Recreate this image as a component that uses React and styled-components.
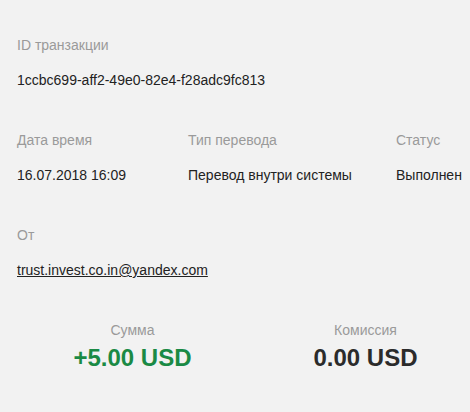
import styled, { createGlobalStyle } from "styled-components";

const GlobalStyle = createGlobalStyle`
    body {
        margin: 0;
        background: #f2f2f2;
        font-family: "Liberation Sans", Arial, sans-serif;
    }
`

export default function App() {
    return (
        <>
            <GlobalStyle />
            <Page>
                <Section>
                    <Label>ID транзакции</Label>
                    <Value>1ccbc699-aff2-49e0-82e4-f28adc9fc813</Value>
                </Section>

                <InfoGrid>
                    <Label>Дата время</Label>
                    <Label>Тип перевода</Label>
                    <Label>Статус</Label>
                    <Value>16.07.2018 16:09</Value>
                    <Value>Перевод внутри системы</Value>
                    <Value>Выполнен</Value>
                </InfoGrid>

                <Section>
                    <Label>От</Label>
                    <Value><Email href="#">trust.invest.co.in@yandex.com</Email></Value>
                </Section>

                <Totals>
                    <Total>
                        <TotalLabel>Сумма</TotalLabel>
                        <Amount $positive>+5.00 USD</Amount>
                    </Total>
                    <Total>
                        <TotalLabel>Комиссия</TotalLabel>
                        <Amount>0.00 USD</Amount>
                    </Total>
                </Totals>
            </Page>
        </>
    );
}

const Page = styled.div`
    padding: 35px 0 0 17px;
    display: flex;
    flex-direction: column;
    gap: 40px;
    font-size: 14px;
    line-height: 20px;
`

const Section = styled.div`
    display: flex;
    flex-direction: column;
    gap: 15px;
`

const InfoGrid = styled.div`
    display: grid;
    grid-template-columns: 171px 208px auto;
    row-gap: 15px;
`

const Label = styled.div`
    color: #9a9a9a;
`

const Value = styled.div`
    color: #222;
`

const Email = styled.a`
    color: #222;
    text-decoration: underline;
`

const Totals = styled.div`
    display: grid;
    grid-template-columns: 233px 233px;
    margin-left: -1px;
`

const Total = styled.div`
    display: flex;
    flex-direction: column;
    align-items: center;
    gap: 4px;
`

const TotalLabel = styled.div`
    color: #9a9a9a;
`

const Amount = styled.div`
    font-size: 24px;
    line-height: 28px;
    font-weight: bold;
    color: ${p => (p.$positive ? "#1a8a45" : "#2b2b2b")};
`
